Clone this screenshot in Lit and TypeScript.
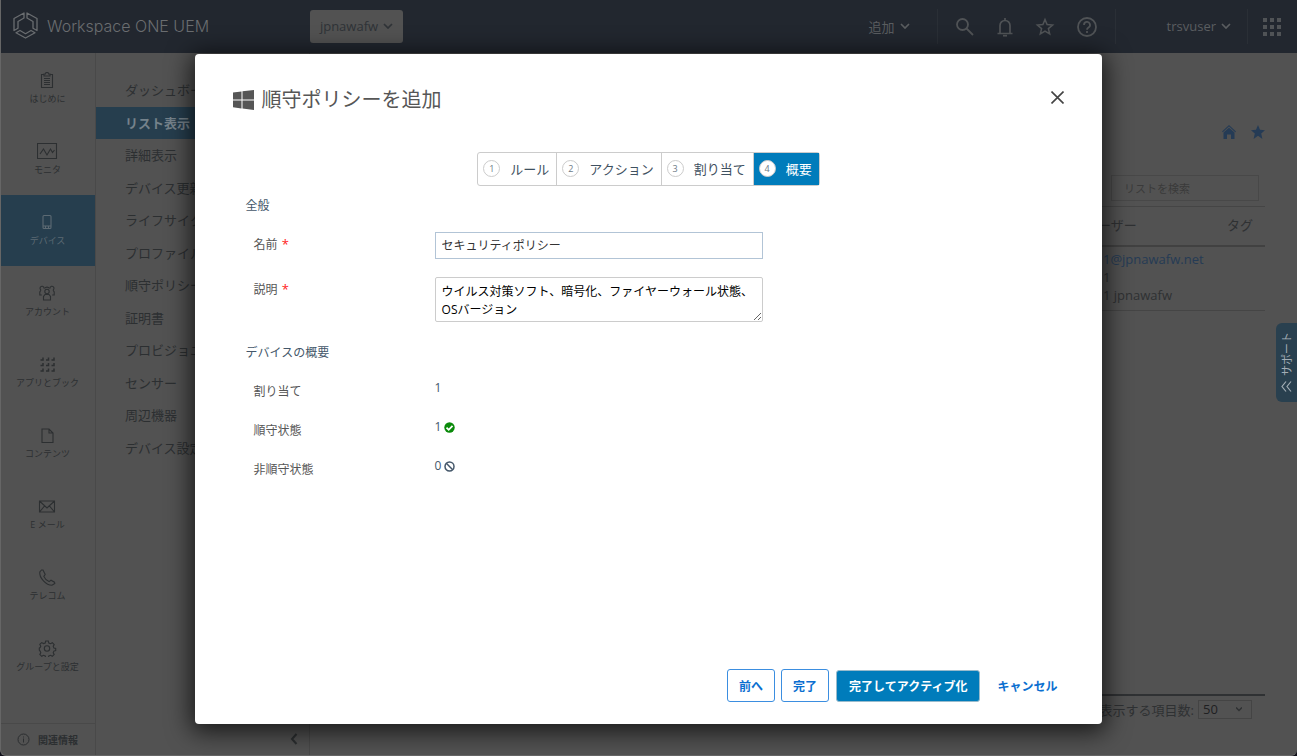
import { LitElement, html, css, svg } from "lit";
import { customElement, state } from "lit/decorators.js";
import { classMap } from "lit/directives/class-map.js";

const chevron = html`<svg class="chev" viewBox="0 0 10 6" width="10" height="6" aria-hidden="true"><path d="M1 1l4 4 4-4" fill="none" stroke="currentColor" stroke-width="1.700"/></svg>`;

const navIcons: Record<string, unknown> = {
  start: svg`<path d="M4.5 3.5h-2v13h11v-13h-2M5 3v2h6V3H9.500l-.5-1.500h-2L6.500 3zM5 7.500h6M5 9.500h6M5 11.500h6M5 13.500h6"/>`,
  monitor: svg`<path d="M-1.500 1.500h19v15h-19zM1 12l3.500-5 3.500 6 3.500-6 2 3.500L15.500 8"/>`,
  device: svg`<rect x="4" y="2.500" width="8" height="13" rx="1"/><path d="M4 13h8M6.500 13v2M9.500 13v2"/>`,
  accounts: svg`<circle cx="8" cy="7.500" r="2.200"/><path d="M4.500 16v-3.500l1.500-2h4l1.500 2V16zM5 4.500a2 2 0 1 0-3 1.500M2 6L.8 8v3h2M11 4.500a2 2 0 1 1 3 1.500M14 6l1.200 2v3h-2M5.500 4.500a3 3 0 0 1 5 0"/>`,
  apps: svg`<path d="M1.500 5h2.500V2.500M7 5h2.500V2.500M12.500 5H15V2.500M1.500 10.500h2.500V8M7 10.500h2.500V8M12.500 10.500H15V8M1.500 16h2.500v-2.500M7 16h2.500v-2.500M12.500 16H15v-2.500" stroke-width="1.500"/>`,
  content: svg`<path d="M3 3h7l4 4v9.500H3zM10 3v4h4"/>`,
  mail: svg`<path d="M.5 4h15v11H.5zM.5 4L8 11l7.500-7M.5 15l5-6M15.500 15l-5-6"/>`,
  telecom: svg`<path d="M2.500 2L.8 4c-.8 6 6.500 13 12.200 13.300l2.800-1.800-.3-1.300-3.500-2-2 1.400C7.700 12.600 5.500 10 4.800 8.400L6.200 6.500 4 2z"/>`,
  settings: svg`<circle cx="8" cy="9.500" r="2.700"/><path d="M6.700 2h2.600l.5 2 1.700.7 1.800-1 1.900 1.900-1 1.800.7 1.600 1.800.5v2l-1.800.6-.7 1.600 1 1.800-1.900 1.800-1.800-1-1.700.7-.5 1.800H6.700l-.5-1.800-1.700-.7-1.800 1-1.900-1.800 1-1.800-.7-1.600L.3 11V9l.8-.5.7-1.300-1-1.800 1.900-1.800 1.800 1L6.200 4z"/>`,
};

const mainNav = [
  ["start", "はじめに"],
  ["monitor", "モニタ"],
  ["device", "デバイス"],
  ["accounts", "アカウント"],
  ["apps", "アプリとブック"],
  ["content", "コンテンツ"],
  ["mail", "E メール"],
  ["telecom", "テレコム"],
  ["settings", "グループと設定"],
];

const subNav = [
  "ダッシュボード", "リスト表示", "詳細表示", "デバイス更新", "ライフサイクル", "プロファイル",
  "順守ポリシー", "証明書", "プロビジョニング", "センサー", "周辺機器", "デバイス設定",
];

const fonts = css`
  :host { font-family: "Open Sans", "Noto Sans CJK JP", sans-serif; }
  * { box-sizing: border-box; }
  button, input, textarea, select { font-family: inherit; margin: 0; }
  button { border: 0; background: none; padding: 0; color: inherit; }
  a { color: inherit; text-decoration: none; }
  svg { display: block; flex: none; }
`;

@customElement("uem-header")
class UemHeader extends LitElement {
  static styles = [fonts, css`
    :host { display: block; background: #22272f; color: #5a5d60; }
    .bar { display: flex; align-items: center; height: 53px; padding-right: 15px; font-size: 13px; }
    .brand { display: flex; align-items: center; gap: 9px; width: 309px; padding: 0 0 2px 12px; font: 300 16px/24px "Inter", sans-serif; color: #6a6d70; }
    .org { display: flex; align-items: center; justify-content: center; gap: 5px; width: 93px; height: 33px; padding-bottom: 2px; border-radius: 3px; background: #525252; color: #2f3337; font-size: 13px; }
    .space { flex: 1; }
    .drop { display: flex; align-items: center; gap: 5px; padding-bottom: 1px; font-size: 13px; }
    .tools { display: flex; align-items: center; justify-content: space-between; width: 179px; height: 35px; padding: 0 18px 0 17px; margin-left: 27px; border: solid #2a2f36; border-width: 0 1px; color: #505356; }
    .user { height: 35px; padding-right: 16px; margin-left: 51px; border-right: 1px solid #2a2f36; }
    .grid { margin-left: 15px; color: #505356; }
  `];
  render() {
    return html`<header class="bar">
      <div class="brand">
        <svg width="25" height="27" viewBox="0 0 25 27" fill="none" stroke="currentColor" stroke-width="1.300" stroke-linejoin="round" aria-hidden="true">
          <path d="M11 1L1 6.500v12l4-2.300V9.500l6-3.500zM14 1l10 5.500v12l-4-2.300V9.500l-6-3.500zM3 20.800l4-2.300 5.500 3.200 5.500-3.200 4 2.300-9.500 5.200z"/>
        </svg>
        <span>Workspace ONE UEM</span>
      </div>
      <button class="org">jpnawafw ${chevron}</button>
      <span class="space"></span>
      <button class="drop">追加 ${chevron}</button>
      <div class="tools">
        <button aria-label="検索"><svg width="20" height="20" viewBox="0 0 20 20" fill="none" stroke="currentColor" stroke-width="1.800"><circle cx="7.500" cy="7.500" r="5.500"/><path d="M11.500 11.500l6.500 6.500"/></svg></button>
        <button aria-label="通知"><svg width="18" height="20" viewBox="0 0 18 20" fill="none" stroke="currentColor" stroke-width="1.700"><path d="M1.500 16.500h15M4 16V8.500a5 5 0 0 1 10 0V16M9 3.500V1"/><path d="M7 18.700h4"/></svg></button>
        <button aria-label="お気に入り"><svg width="20" height="20" viewBox="0 0 20 20" fill="none" stroke="currentColor" stroke-width="1.500"><path d="M10 2.500l2.100 5.100 5.500.4-4.200 3.600 1.300 5.400-4.700-2.900L5.300 17l1.300-5.400L2.400 8l5.500-.4z"/></svg></button>
        <button aria-label="ヘルプ"><svg width="20" height="20" viewBox="0 0 20 20" fill="none" stroke="currentColor" stroke-width="1.800"><circle cx="10" cy="10" r="9"/><path d="M7 8a3 3 0 1 1 4.500 2.500C10.300 11.200 10 11.500 10 12.700M10 14v2"/></svg></button>
      </div>
      <button class="drop user">trsvuser ${chevron}</button>
      <button class="grid" aria-label="アプリ一覧"><svg width="19" height="18" viewBox="0 0 19 18" fill="currentColor"><path d="M0 0h4v4H0zM7 0h4v4H7zM14 0h4v4h-4zM0 7h4v4H0zM7 7h4v4H7zM14 7h4v4h-4zM0 14h4v4H0zM7 14h4v4H7zM14 14h4v4h-4z"/></svg></button>
    </header>`;
  }
}

@customElement("uem-nav")
class UemNav extends LitElement {
  static styles = [fonts, css`
    :host { display: flex; flex: none; color: #2c2f31; }
    .main { display: flex; flex-direction: column; width: 96px; border-right: 1px solid #494949; }
    .item { display: flex; flex-direction: column; align-items: center; gap: 3px; height: 71px; padding-top: 18px; font-size: 9px; line-height: 14px; }
    .item.on { background: #263e4e; color: #5c6a73; }
    .about { display: flex; align-items: center; gap: 8px; margin-top: auto; height: 32px; padding-left: 17px; border-top: 1px solid #494949; font-size: 10px; font-weight: 700; }
    .sub { display: flex; flex-direction: column; width: 214px; border-right: 1px solid #494949; padding-top: 21px; }
    .list { display: grid; grid-auto-rows: 1fr; height: 390px; }
    .link { display: flex; align-items: center; padding: 0 0 1px 29px; font-size: 13px; white-space: nowrap; }
    .link.on { background: #263e4e; color: #75828b; font-weight: 700; }
    .fold { margin-top: auto; height: 32px; padding: 0 11px; align-self: flex-end; }
  `];
  render() {
    return html`
      <nav class="main">
        ${mainNav.map(([icon, label]) => html`<a href="#" class=${classMap({ item: true, on: icon === "device" })}>
          <svg width="21" height="18" viewBox="-2 0 21 18" fill="none" stroke="currentColor" stroke-width="1.100" aria-hidden="true">${navIcons[icon]}</svg>
          <span>${label}</span></a>`)}
        <a href="#" class="about">
          <svg width="13" height="13" viewBox="0 0 13 13" fill="none" stroke="currentColor" aria-hidden="true"><circle cx="6.500" cy="6.500" r="5.500"/><path d="M6.500 5.500v4M6.500 3.500v1"/></svg>
          関連情報</a>
      </nav>
      <nav class="sub">
        <div class="list">${subNav.map((t) => html`<a href="#" class=${classMap({ link: true, on: t === "リスト表示" })}>${t}</a>`)}</div>
        <button class="fold" aria-label="折りたたむ"><svg width="8" height="12" viewBox="0 0 8 12" fill="none" stroke="currentColor" stroke-width="2"><path d="M6.500 1L2 6l4.500 5"/></svg></button>
      </nav>`;
  }
}

@customElement("device-list")
class DeviceList extends LitElement {
  static styles = [fonts, css`
    :host { display: flex; flex: 1; flex-direction: column; min-width: 0; padding: 72px 32px 36px 32px; color: #2f3133; font-size: 13px; }
    .marks { display: flex; justify-content: flex-end; gap: 15px; color: #253b55; }
    .search { align-self: flex-end; width: 148px; height: 26px; margin: 36px 6px 5px 0; padding: 0 12px; border: 1px solid #484848; background: none; font-size: 11px; }
    .search::placeholder { color: #3a3a3a; opacity: 1; }
    .table { width: 100%; border-collapse: collapse; table-layout: fixed; border-top: 1px solid #454545; }
    .table th { height: 39px; padding: 0 0 2px; font-weight: 400; text-align: left; border-bottom: 2px solid #414141; }
    .table td { padding: 3px 0 6px 18px; line-height: 18px; vertical-align: top; border-bottom: 1px solid #454545; }
    .table td:last-child { padding: 0; }
    .usercol { width: 142px; }
    .tagcol { width: 38px; }
    .mail { color: #253b55; }
    .pager { display: flex; justify-content: flex-end; align-items: center; gap: 4px; margin-top: auto; padding: 4px 13px 0 0; border-top: 2px solid #2f3133; white-space: nowrap; }
    .size { appearance: none; width: 54px; height: 19px; padding: 0 4px; border: 1px solid #444; border-radius: 0; background: none; color: #1f2022; font-size: 13px; line-height: 17px; grid-area: 1 / 1; }
    .pick { display: grid; align-items: center; }
    .arrow { grid-area: 1 / 1; justify-self: end; margin-right: 10px; pointer-events: none; }
  `];
  render() {
    return html`
      <div class="marks">
        <a href="#" aria-label="ホーム"><svg width="14" height="14" viewBox="0 0 14 14" fill="currentColor"><path d="M0 6.500L7 0l7 6.500-.8.7L7 1.500.8 7.200zM1.500 7.500L7 2.700l5.500 4.800V14H9V9.500H5V14H1.500z"/></svg></a>
        <a href="#" aria-label="お気に入り"><svg width="14" height="14" viewBox="0 0 14 14" fill="currentColor"><path d="M7 0l2 4.800 5 .4-3.800 3.300L11.400 14 7 10.800 2.600 14l1.200-5.500L0 5.200l5-.4z"/></svg></a>
      </div>
      <input class="search" type="search" placeholder="リストを検索" aria-label="リストを検索" />
      <table class="table">
        <colgroup><col /><col class="usercol" /><col class="tagcol" /></colgroup>
        <thead><tr><th></th><th>ユーザー</th><th>タグ</th></tr></thead>
        <tbody><tr><td></td><td><a href="#" class="mail">1@jpnawafw.net</a><br />1<br />1 jpnawafw</td><td></td></tr></tbody>
      </table>
      <div class="pager">
        <label for="size">表示する項目数:</label>
        <span class="pick"><select class="size" id="size"><option>50</option></select>
        <svg class="arrow" width="6" height="5" viewBox="0 0 6 5" fill="none" stroke="currentColor" stroke-width="1.500" aria-hidden="true"><path d="M0 .5l3 3 3-3"/></svg></span>
      </div>`;
  }
}

@customElement("policy-dialog")
class PolicyDialog extends LitElement {
  @state() step = 4;
  static styles = [fonts, css`
    :host { display: flex; flex-direction: column; width: 70%; padding: 32px 38px 22px; border-radius: 4px; background: #fff; box-shadow: 0 4px 24px 4px rgba(0, 0, 0, .7); color: #565656; font-size: 12px; line-height: 18px; }
    .head { display: flex; align-items: center; gap: 8px; height: 28px; }
    .title { flex: 1; margin: 0; font-size: 20px; font-weight: 400; line-height: 28px; color: #565656; }
    .close { align-self: flex-start; padding: 5px 0; }
    .steps { display: flex; align-self: center; list-style: none; margin: 38px 0 0; padding: 0; border: 1px solid #ccc; border-radius: 3px; }
    .step { display: flex; align-items: center; gap: 10px; height: 32px; padding: 0 7px 1px 5px; font-size: 13px; color: #3f5161; }
    .step + .step { border-left: 1px solid #ccc; }
    .step.on { background: #007cbb; color: #fff; }
    .num { width: 17px; height: 17px; border: 1px solid #ccc; border-radius: 50%; background: #fff; color: #6d7a86; font-size: 9px; line-height: 15px; text-align: center; }
    .section { margin: 0; font-size: 12px; font-weight: 400; color: #44576a; line-height: 18px; }
    .first { margin-top: 11px; }
    .second { margin-top: 22px; }
    .body { padding-left: 13px; }
    .fields { display: grid; grid-template-columns: 181px 328px; row-gap: 18px; padding: 17px 0 0 8px; }
    .fields label { padding-top: 3px; }
    .req { color: #f22; margin-left: 1px; font-size: 13px; }
    .text { width: 100%; height: 27px; padding: 0 6px 2px; border: 1px solid #b2c4d6; border-radius: 0; font-size: 12px; color: #333; background: #fff; }
    .area { display: block; width: 100%; height: 45px; padding: 5px 6px; border: 1px solid #ccc; border-radius: 2px; font-size: 12px; line-height: 18px; color: #000; background: #fff; resize: both; overflow: hidden; }
    .facts { display: grid; grid-template-columns: 181px 1fr; row-gap: 21px; margin: 0; padding: 21px 0 0 8px; }
    .facts dt { line-height: 18px; }
    .facts dd { display: flex; align-items: center; gap: 3px; height: 10px; margin: 0; color: #44576a; }
    .foot { display: flex; align-items: center; justify-content: flex-end; margin-top: auto; padding-right: 7px; font-weight: 700; color: #0b6fd0; }
    .btn { height: 33px; padding: 0 11px; margin-right: 6px; border: 1px solid #3b8ee0; border-radius: 3px; font-size: 12px; font-weight: 700; }
    .primary { height: 32px; padding: 0 12px; margin: 1px 17px 0 1px; background: #007cbb; border-color: #9bc; color: #fff; }
    .link { font-size: 12px; font-weight: 700; }
  `];
  render() {
    const steps = ["ルール", "アクション", "割り当て", "概要"];
    return html`
      <header class="head">
        <svg width="21" height="20" viewBox="0 0 21 20" fill="#565656" aria-hidden="true"><path d="M0 2.500L8.500 1.500v8H0zM9.500 1.300L21 0v9.500H9.500zM0 10.500h8.500v8L0 17.300zM9.500 10.500H21V20L9.500 18.600z"/></svg>
        <h1 class="title">順守ポリシーを追加</h1>
        <button class="close" aria-label="閉じる"><svg width="13" height="13" viewBox="0 0 13 13" fill="none" stroke="#444" stroke-width="1.600"><path d="M.5.5l12 12M12.500.5l-12 12"/></svg></button>
      </header>
      <ol class="steps">${steps.map((t, i) => html`<li class=${classMap({ step: true, on: i + 1 === this.step })}><span class="num">${i + 1}</span>${t}</li>`)}</ol>
      <div class="body">
        <h2 class="section first">全般</h2>
        <div class="fields">
          <label for="name">名前 <span class="req">*</span></label>
          <input class="text" id="name" type="text" value="セキュリティポリシー" />
          <label for="desc">説明 <span class="req">*</span></label>
          <textarea class="area" id="desc" .value=${"ウイルス対策ソフト、暗号化、ファイヤーウォール状態、OSバージョン"}></textarea>
        </div>
        <h2 class="section second">デバイスの概要</h2>
        <dl class="facts">
          <dt>割り当て</dt><dd>1</dd>
          <dt>順守状態</dt><dd>1 <svg width="11" height="11" viewBox="0 0 11 11" aria-hidden="true"><circle cx="5.500" cy="5.500" r="5.200" fill="#0a8a0a"/><path d="M2.500 5.600l2.200 2.200 3.800-4" fill="none" stroke="#fff" stroke-width="1.800"/></svg></dd>
          <dt>非順守状態</dt><dd>0 <svg width="11" height="11" viewBox="0 0 11 11" fill="none" stroke="#44576a" stroke-width="1.500" aria-hidden="true"><circle cx="5.500" cy="5.500" r="4.500"/><path d="M2.300 2.300l6.400 6.400"/></svg></dd>
        </dl>
      </div>
      <footer class="foot">
        <button class="btn">前へ</button><button class="btn">完了</button><button class="btn primary">完了してアクティブ化</button><button class="link">キャンセル</button>
      </footer>`;
  }
}

@customElement("app-root")
class AppRoot extends LitElement {
  static styles = [fonts, css`
    :host { display: flex; min-height: 100vh; background: #10101a; }
    .shell { display: flex; flex: 1; flex-direction: column; min-width: 0; border: solid #666; border-width: 0 0 1px 1px; border-radius: 0 0 6px 6px; background: #525252; overflow: hidden; }
    .page { display: flex; flex: 1; margin-left: -1px; }
    .layer { position: absolute; inset: 0; display: flex; justify-content: center; padding: 54px 0 32px; }
    .support { position: absolute; right: 0; top: 323px; display: flex; flex-direction: column; align-items: center; gap: 5px; width: 21px; height: 79px; padding: 9px 0; border-radius: 6px 0 0 6px; background: #29404f; color: #a3adb5; }
    .word { writing-mode: vertical-rl; text-orientation: sideways; transform: rotate(180deg); font-size: 11px; line-height: 14px; }
  `];
  render() {
    return html`
      <div class="shell">
        <uem-header></uem-header>
        <div class="page"><uem-nav></uem-nav><device-list></device-list></div>
      </div>
      <button class="support"><span class="word">サポート</span>
        <svg width="11" height="11" viewBox="0 0 11 11" fill="none" stroke="currentColor" stroke-width="1.200" aria-hidden="true"><path d="M5 .5l-4 5 4 5M10 .5l-4 5 4 5"/></svg></button>
      <div class="layer"><policy-dialog role="dialog" aria-label="順守ポリシーを追加"></policy-dialog></div>`;
  }
}
